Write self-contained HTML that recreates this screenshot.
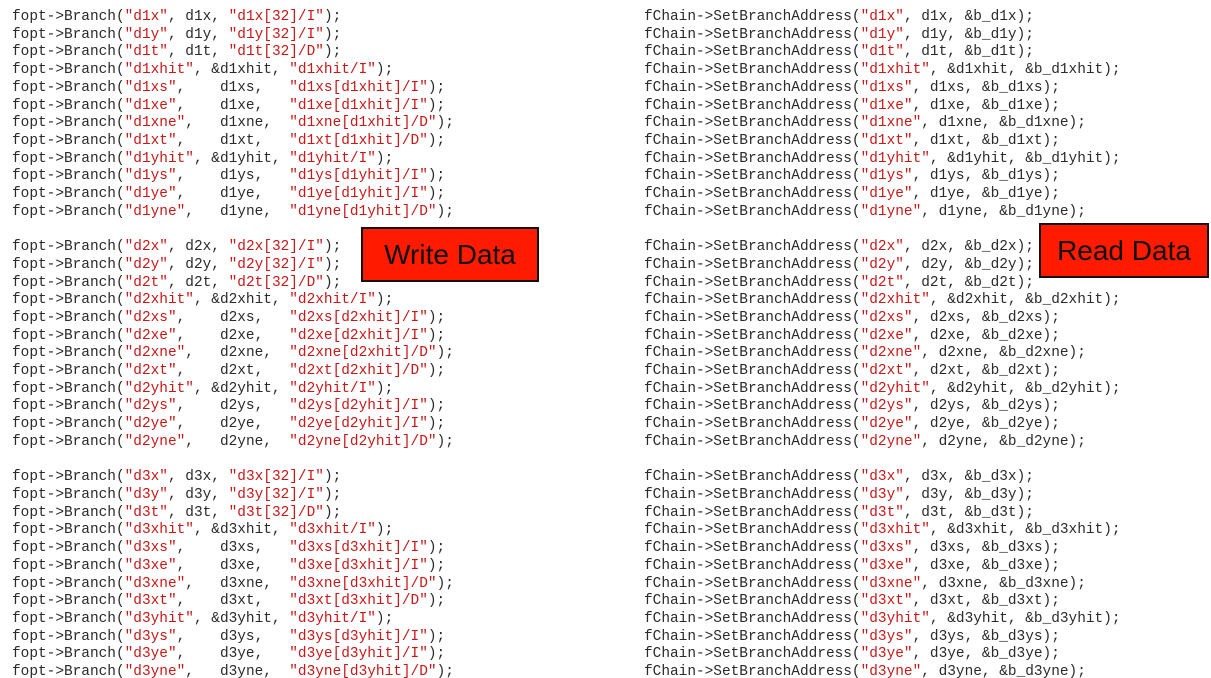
<!DOCTYPE html>
<html><head><meta charset="utf-8"><style>
html,body{margin:0;padding:0;background:#fff;width:1211px;height:678px;overflow:hidden;position:relative}
pre{position:absolute;margin:0;font-family:"Liberation Mono","DejaVu Sans Mono",monospace;font-size:14.45px;line-height:17.7px;color:#2a2a2a}
.s{color:#c81818}
.box{position:absolute;background:#ff1a00;border:2px solid #111;box-sizing:border-box;font-family:"Liberation Sans",sans-serif;font-size:28px;color:#111;display:flex;align-items:center;justify-content:center}
</style></head><body>
<pre style="left:12px;top:9px">fopt->Branch(<span class="s">"d1x"</span>, d1x, <span class="s">"d1x[32]/I"</span>);
fopt->Branch(<span class="s">"d1y"</span>, d1y, <span class="s">"d1y[32]/I"</span>);
fopt->Branch(<span class="s">"d1t"</span>, d1t, <span class="s">"d1t[32]/D"</span>);
fopt->Branch(<span class="s">"d1xhit"</span>, &amp;d1xhit, <span class="s">"d1xhit/I"</span>);
fopt->Branch(<span class="s">"d1xs"</span>,    d1xs,   <span class="s">"d1xs[d1xhit]/I"</span>);
fopt->Branch(<span class="s">"d1xe"</span>,    d1xe,   <span class="s">"d1xe[d1xhit]/I"</span>);
fopt->Branch(<span class="s">"d1xne"</span>,   d1xne,  <span class="s">"d1xne[d1xhit]/D"</span>);
fopt->Branch(<span class="s">"d1xt"</span>,    d1xt,   <span class="s">"d1xt[d1xhit]/D"</span>);
fopt->Branch(<span class="s">"d1yhit"</span>, &amp;d1yhit, <span class="s">"d1yhit/I"</span>);
fopt->Branch(<span class="s">"d1ys"</span>,    d1ys,   <span class="s">"d1ys[d1yhit]/I"</span>);
fopt->Branch(<span class="s">"d1ye"</span>,    d1ye,   <span class="s">"d1ye[d1yhit]/I"</span>);
fopt->Branch(<span class="s">"d1yne"</span>,   d1yne,  <span class="s">"d1yne[d1yhit]/D"</span>);

fopt->Branch(<span class="s">"d2x"</span>, d2x, <span class="s">"d2x[32]/I"</span>);
fopt->Branch(<span class="s">"d2y"</span>, d2y, <span class="s">"d2y[32]/I"</span>);
fopt->Branch(<span class="s">"d2t"</span>, d2t, <span class="s">"d2t[32]/D"</span>);
fopt->Branch(<span class="s">"d2xhit"</span>, &amp;d2xhit, <span class="s">"d2xhit/I"</span>);
fopt->Branch(<span class="s">"d2xs"</span>,    d2xs,   <span class="s">"d2xs[d2xhit]/I"</span>);
fopt->Branch(<span class="s">"d2xe"</span>,    d2xe,   <span class="s">"d2xe[d2xhit]/I"</span>);
fopt->Branch(<span class="s">"d2xne"</span>,   d2xne,  <span class="s">"d2xne[d2xhit]/D"</span>);
fopt->Branch(<span class="s">"d2xt"</span>,    d2xt,   <span class="s">"d2xt[d2xhit]/D"</span>);
fopt->Branch(<span class="s">"d2yhit"</span>, &amp;d2yhit, <span class="s">"d2yhit/I"</span>);
fopt->Branch(<span class="s">"d2ys"</span>,    d2ys,   <span class="s">"d2ys[d2yhit]/I"</span>);
fopt->Branch(<span class="s">"d2ye"</span>,    d2ye,   <span class="s">"d2ye[d2yhit]/I"</span>);
fopt->Branch(<span class="s">"d2yne"</span>,   d2yne,  <span class="s">"d2yne[d2yhit]/D"</span>);

fopt->Branch(<span class="s">"d3x"</span>, d3x, <span class="s">"d3x[32]/I"</span>);
fopt->Branch(<span class="s">"d3y"</span>, d3y, <span class="s">"d3y[32]/I"</span>);
fopt->Branch(<span class="s">"d3t"</span>, d3t, <span class="s">"d3t[32]/D"</span>);
fopt->Branch(<span class="s">"d3xhit"</span>, &amp;d3xhit, <span class="s">"d3xhit/I"</span>);
fopt->Branch(<span class="s">"d3xs"</span>,    d3xs,   <span class="s">"d3xs[d3xhit]/I"</span>);
fopt->Branch(<span class="s">"d3xe"</span>,    d3xe,   <span class="s">"d3xe[d3xhit]/I"</span>);
fopt->Branch(<span class="s">"d3xne"</span>,   d3xne,  <span class="s">"d3xne[d3xhit]/D"</span>);
fopt->Branch(<span class="s">"d3xt"</span>,    d3xt,   <span class="s">"d3xt[d3xhit]/D"</span>);
fopt->Branch(<span class="s">"d3yhit"</span>, &amp;d3yhit, <span class="s">"d3yhit/I"</span>);
fopt->Branch(<span class="s">"d3ys"</span>,    d3ys,   <span class="s">"d3ys[d3yhit]/I"</span>);
fopt->Branch(<span class="s">"d3ye"</span>,    d3ye,   <span class="s">"d3ye[d3yhit]/I"</span>);
fopt->Branch(<span class="s">"d3yne"</span>,   d3yne,  <span class="s">"d3yne[d3yhit]/D"</span>);</pre>
<pre style="left:644px;top:9px">fChain->SetBranchAddress(<span class="s">"d1x"</span>, d1x, &amp;b_d1x);
fChain->SetBranchAddress(<span class="s">"d1y"</span>, d1y, &amp;b_d1y);
fChain->SetBranchAddress(<span class="s">"d1t"</span>, d1t, &amp;b_d1t);
fChain->SetBranchAddress(<span class="s">"d1xhit"</span>, &amp;d1xhit, &amp;b_d1xhit);
fChain->SetBranchAddress(<span class="s">"d1xs"</span>, d1xs, &amp;b_d1xs);
fChain->SetBranchAddress(<span class="s">"d1xe"</span>, d1xe, &amp;b_d1xe);
fChain->SetBranchAddress(<span class="s">"d1xne"</span>, d1xne, &amp;b_d1xne);
fChain->SetBranchAddress(<span class="s">"d1xt"</span>, d1xt, &amp;b_d1xt);
fChain->SetBranchAddress(<span class="s">"d1yhit"</span>, &amp;d1yhit, &amp;b_d1yhit);
fChain->SetBranchAddress(<span class="s">"d1ys"</span>, d1ys, &amp;b_d1ys);
fChain->SetBranchAddress(<span class="s">"d1ye"</span>, d1ye, &amp;b_d1ye);
fChain->SetBranchAddress(<span class="s">"d1yne"</span>, d1yne, &amp;b_d1yne);

fChain->SetBranchAddress(<span class="s">"d2x"</span>, d2x, &amp;b_d2x);
fChain->SetBranchAddress(<span class="s">"d2y"</span>, d2y, &amp;b_d2y);
fChain->SetBranchAddress(<span class="s">"d2t"</span>, d2t, &amp;b_d2t);
fChain->SetBranchAddress(<span class="s">"d2xhit"</span>, &amp;d2xhit, &amp;b_d2xhit);
fChain->SetBranchAddress(<span class="s">"d2xs"</span>, d2xs, &amp;b_d2xs);
fChain->SetBranchAddress(<span class="s">"d2xe"</span>, d2xe, &amp;b_d2xe);
fChain->SetBranchAddress(<span class="s">"d2xne"</span>, d2xne, &amp;b_d2xne);
fChain->SetBranchAddress(<span class="s">"d2xt"</span>, d2xt, &amp;b_d2xt);
fChain->SetBranchAddress(<span class="s">"d2yhit"</span>, &amp;d2yhit, &amp;b_d2yhit);
fChain->SetBranchAddress(<span class="s">"d2ys"</span>, d2ys, &amp;b_d2ys);
fChain->SetBranchAddress(<span class="s">"d2ye"</span>, d2ye, &amp;b_d2ye);
fChain->SetBranchAddress(<span class="s">"d2yne"</span>, d2yne, &amp;b_d2yne);

fChain->SetBranchAddress(<span class="s">"d3x"</span>, d3x, &amp;b_d3x);
fChain->SetBranchAddress(<span class="s">"d3y"</span>, d3y, &amp;b_d3y);
fChain->SetBranchAddress(<span class="s">"d3t"</span>, d3t, &amp;b_d3t);
fChain->SetBranchAddress(<span class="s">"d3xhit"</span>, &amp;d3xhit, &amp;b_d3xhit);
fChain->SetBranchAddress(<span class="s">"d3xs"</span>, d3xs, &amp;b_d3xs);
fChain->SetBranchAddress(<span class="s">"d3xe"</span>, d3xe, &amp;b_d3xe);
fChain->SetBranchAddress(<span class="s">"d3xne"</span>, d3xne, &amp;b_d3xne);
fChain->SetBranchAddress(<span class="s">"d3xt"</span>, d3xt, &amp;b_d3xt);
fChain->SetBranchAddress(<span class="s">"d3yhit"</span>, &amp;d3yhit, &amp;b_d3yhit);
fChain->SetBranchAddress(<span class="s">"d3ys"</span>, d3ys, &amp;b_d3ys);
fChain->SetBranchAddress(<span class="s">"d3ye"</span>, d3ye, &amp;b_d3ye);
fChain->SetBranchAddress(<span class="s">"d3yne"</span>, d3yne, &amp;b_d3yne);</pre>
<div class="box" style="left:361px;top:227px;width:178px;height:55px">Write Data</div>
<div class="box" style="left:1039px;top:223px;width:170px;height:55px">Read Data</div>
</body></html>
